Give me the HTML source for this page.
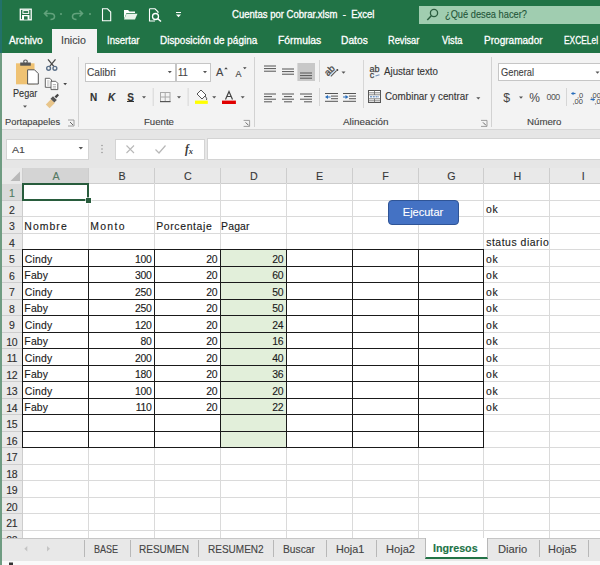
<!DOCTYPE html><html><head><meta charset="utf-8"><style>
*{margin:0;padding:0;box-sizing:border-box}
html,body{width:600px;height:565px;overflow:hidden;background:#fff}
body{position:relative;font-family:"Liberation Sans",sans-serif;color:#222}
.a{position:absolute}
.t{position:absolute;white-space:nowrap;line-height:1;-webkit-text-stroke:0.12px currentColor}
svg{position:absolute;left:0;top:0}
</style></head><body>
<div class="a" style="left:0;top:0;width:600px;height:53px;background:#217346"></div>
<div class="a" style="left:418.5px;top:5.5px;width:182px;height:18.5px;background:#a0cdb0"></div>
<div class="t" style="left:232.12px;top:10.10px;font-size:10.00px;transform:scaleX(0.953);transform-origin:0 0;color:#fff;-webkit-text-stroke:0.3px #fff;">Cuentas por Cobrar.xlsm&nbsp; -&nbsp; Excel</div>
<div class="t" style="left:445.44px;top:9.90px;font-size:10.00px;transform:scaleX(0.927);transform-origin:0 0;color:#24573a;">¿Qué desea hacer?</div>
<div class="a" style="left:52px;top:29px;width:45px;height:25px;background:#f3f3f3"></div>
<div class="t" style="left:60.74px;top:36.26px;font-size:10.29px;transform:scaleX(1.034);transform-origin:0 0;color:#444;">Inicio</div>
<div class="t" style="left:9.20px;top:36.26px;font-size:10.29px;transform:scaleX(0.981);transform-origin:0 0;color:#fff;-webkit-text-stroke:0.3px #fff;">Archivo</div>
<div class="t" style="left:106.64px;top:36.26px;font-size:10.29px;transform:scaleX(0.931);transform-origin:0 0;color:#fff;-webkit-text-stroke:0.3px #fff;">Insertar</div>
<div class="t" style="left:160.20px;top:36.26px;font-size:10.29px;transform:scaleX(0.966);transform-origin:0 0;color:#fff;-webkit-text-stroke:0.3px #fff;">Disposición de página</div>
<div class="t" style="left:278.17px;top:36.26px;font-size:10.29px;transform:scaleX(1.008);transform-origin:0 0;color:#fff;-webkit-text-stroke:0.3px #fff;">Fórmulas</div>
<div class="t" style="left:341.18px;top:36.26px;font-size:10.29px;transform:scaleX(0.996);transform-origin:0 0;color:#fff;-webkit-text-stroke:0.3px #fff;">Datos</div>
<div class="t" style="left:387.76px;top:36.26px;font-size:10.29px;transform:scaleX(0.899);transform-origin:0 0;color:#fff;-webkit-text-stroke:0.3px #fff;">Revisar</div>
<div class="t" style="left:441.61px;top:36.26px;font-size:10.29px;transform:scaleX(0.897);transform-origin:0 0;color:#fff;-webkit-text-stroke:0.3px #fff;">Vista</div>
<div class="t" style="left:484.20px;top:36.26px;font-size:10.29px;transform:scaleX(0.977);transform-origin:0 0;color:#fff;-webkit-text-stroke:0.3px #fff;">Programador</div>
<div class="t" style="left:564.33px;top:36.26px;font-size:10.29px;transform:scaleX(0.812);transform-origin:0 0;color:#fff;-webkit-text-stroke:0.3px #fff;">EXCELeI</div>
<div class="a" style="left:0;top:53px;width:600px;height:77px;background:#f3f3f3;border-bottom:1px solid #d6d6d6"></div>
<div class="a" style="left:77.5px;top:57px;width:1px;height:70px;background:#d2d2d2"></div>
<div class="a" style="left:254px;top:57px;width:1px;height:70px;background:#d2d2d2"></div>
<div class="a" style="left:490.5px;top:57px;width:1px;height:70px;background:#d2d2d2"></div>
<div class="t" style="left:4.55px;top:118.47px;font-size:8.86px;transform:scaleX(1.057);transform-origin:0 0;color:#444;">Portapapeles</div>
<div class="t" style="left:143.83px;top:118.47px;font-size:8.86px;transform:scaleX(1.087);transform-origin:0 0;color:#444;">Fuente</div>
<div class="t" style="left:342.50px;top:118.47px;font-size:8.86px;transform:scaleX(1.117);transform-origin:0 0;color:#444;">Alineación</div>
<div class="t" style="left:526.82px;top:118.47px;font-size:8.86px;transform:scaleX(1.096);transform-origin:0 0;color:#444;">Número</div>
<div class="t" style="left:13.27px;top:88.80px;font-size:10.00px;transform:scaleX(0.911);transform-origin:0 0;color:#333;">Pegar</div>
<div class="a" style="left:84.7px;top:63px;width:91.5px;height:18.5px;background:#fff;border:1px solid #c6c6c6"></div>
<div class="a" style="left:175.7px;top:63px;width:35px;height:18.5px;background:#fff;border:1px solid #c6c6c6"></div>
<div class="t" style="left:87.19px;top:67.50px;font-size:10.00px;transform:scaleX(1.015);transform-origin:0 0;color:#444;">Calibri</div>
<div class="t" style="left:178.24px;top:67.50px;font-size:10.00px;transform:scaleX(0.945);transform-origin:0 0;color:#444;">11</div>
<div class="a" style="left:498px;top:63px;width:110px;height:18px;background:#fff;border:1px solid #c6c6c6"></div>
<div class="t" style="left:500.54px;top:67.50px;font-size:10.00px;transform:scaleX(0.928);transform-origin:0 0;color:#444;">General</div>
<div class="t" style="left:90px;top:92.5px;font-size:10px;color:#333;font-weight:bold">N</div>
<div class="t" style="left:108px;top:92.5px;font-size:10px;color:#333;font-weight:bold;font-style:italic">K</div>
<div class="t" style="left:127.3px;top:92.5px;font-size:10px;color:#333;font-weight:bold">S</div>
<div class="t" style="left:216px;top:67px;font-size:11px;color:#444;">A</div>
<div class="t" style="left:235.5px;top:69.5px;font-size:9px;color:#444;">A</div>
<div class="t" style="left:384.40px;top:66.74px;font-size:10.43px;transform:scaleX(0.931);transform-origin:0 0;color:#333;">Ajustar texto</div>
<div class="t" style="left:384.51px;top:92.14px;font-size:10.43px;transform:scaleX(0.943);transform-origin:0 0;color:#333;">Combinar y centrar</div>
<div class="a" style="left:0;top:130px;width:600px;height:38px;background:#e6e6e6"></div>
<div class="a" style="left:6px;top:139px;width:83px;height:21px;background:#fff;border:1px solid #d4d4d4"></div>
<div class="t" style="left:11.70px;top:145.04px;font-size:9.71px;transform:scaleX(1.090);transform-origin:0 0;color:#444;">A1</div>
<div class="a" style="left:114.5px;top:138.5px;width:90px;height:21px;background:#fff;border:1px solid #d4d4d4"></div>
<div class="a" style="left:207px;top:138px;width:393px;height:21.5px;background:#fff;border:1px solid #d4d4d4;border-right:none"></div>
<div class="a" style="left:0;top:168px;width:600px;height:15.5px;background:#e9e9e9;border-bottom:1px solid #cdcdcd"></div>
<div class="a" style="left:0;top:168px;width:22.5px;height:370px;background:#e9e9e9;border-right:1px solid #cdcdcd"></div>
<div class="a" style="left:22.6px;top:168px;width:65.9px;height:15.5px;background:#d4d4d4;border-bottom:1px solid #9fbfa8"></div>
<div class="a" style="left:0;top:183.5px;width:22.5px;height:16.5px;background:#dadada;border-right:1px solid #c0d0c4"></div>
<div class="a" style="left:88.0px;top:168px;width:1px;height:15px;background:#cdcdcd"></div>
<div class="a" style="left:88.0px;top:183px;width:1px;height:355px;background:#dadada"></div>
<div class="a" style="left:153.9px;top:168px;width:1px;height:15px;background:#cdcdcd"></div>
<div class="a" style="left:153.9px;top:183px;width:1px;height:355px;background:#dadada"></div>
<div class="a" style="left:219.8px;top:168px;width:1px;height:15px;background:#cdcdcd"></div>
<div class="a" style="left:219.8px;top:183px;width:1px;height:355px;background:#dadada"></div>
<div class="a" style="left:285.70000000000005px;top:168px;width:1px;height:15px;background:#cdcdcd"></div>
<div class="a" style="left:285.70000000000005px;top:183px;width:1px;height:355px;background:#dadada"></div>
<div class="a" style="left:351.6px;top:168px;width:1px;height:15px;background:#cdcdcd"></div>
<div class="a" style="left:351.6px;top:183px;width:1px;height:355px;background:#dadada"></div>
<div class="a" style="left:417.50000000000006px;top:168px;width:1px;height:15px;background:#cdcdcd"></div>
<div class="a" style="left:417.50000000000006px;top:183px;width:1px;height:355px;background:#dadada"></div>
<div class="a" style="left:483.4000000000001px;top:168px;width:1px;height:15px;background:#cdcdcd"></div>
<div class="a" style="left:483.4000000000001px;top:183px;width:1px;height:355px;background:#dadada"></div>
<div class="a" style="left:549.3000000000001px;top:168px;width:1px;height:15px;background:#cdcdcd"></div>
<div class="a" style="left:549.3000000000001px;top:183px;width:1px;height:355px;background:#dadada"></div>
<div class="a" style="left:615.2px;top:168px;width:1px;height:15px;background:#cdcdcd"></div>
<div class="a" style="left:615.2px;top:183px;width:1px;height:355px;background:#dadada"></div>
<div class="a" style="left:0;top:199.5px;width:22.5px;height:1px;background:#cdcdcd"></div>
<div class="a" style="left:22.5px;top:199.5px;width:578px;height:1px;background:#dadada"></div>
<div class="a" style="left:0;top:216.0px;width:22.5px;height:1px;background:#cdcdcd"></div>
<div class="a" style="left:22.5px;top:216.0px;width:578px;height:1px;background:#dadada"></div>
<div class="a" style="left:0;top:232.5px;width:22.5px;height:1px;background:#cdcdcd"></div>
<div class="a" style="left:22.5px;top:232.5px;width:578px;height:1px;background:#dadada"></div>
<div class="a" style="left:0;top:249.0px;width:22.5px;height:1px;background:#cdcdcd"></div>
<div class="a" style="left:22.5px;top:249.0px;width:578px;height:1px;background:#dadada"></div>
<div class="a" style="left:0;top:265.5px;width:22.5px;height:1px;background:#cdcdcd"></div>
<div class="a" style="left:22.5px;top:265.5px;width:578px;height:1px;background:#dadada"></div>
<div class="a" style="left:0;top:282.0px;width:22.5px;height:1px;background:#cdcdcd"></div>
<div class="a" style="left:22.5px;top:282.0px;width:578px;height:1px;background:#dadada"></div>
<div class="a" style="left:0;top:298.5px;width:22.5px;height:1px;background:#cdcdcd"></div>
<div class="a" style="left:22.5px;top:298.5px;width:578px;height:1px;background:#dadada"></div>
<div class="a" style="left:0;top:315.0px;width:22.5px;height:1px;background:#cdcdcd"></div>
<div class="a" style="left:22.5px;top:315.0px;width:578px;height:1px;background:#dadada"></div>
<div class="a" style="left:0;top:331.5px;width:22.5px;height:1px;background:#cdcdcd"></div>
<div class="a" style="left:22.5px;top:331.5px;width:578px;height:1px;background:#dadada"></div>
<div class="a" style="left:0;top:348.0px;width:22.5px;height:1px;background:#cdcdcd"></div>
<div class="a" style="left:22.5px;top:348.0px;width:578px;height:1px;background:#dadada"></div>
<div class="a" style="left:0;top:364.5px;width:22.5px;height:1px;background:#cdcdcd"></div>
<div class="a" style="left:22.5px;top:364.5px;width:578px;height:1px;background:#dadada"></div>
<div class="a" style="left:0;top:381.0px;width:22.5px;height:1px;background:#cdcdcd"></div>
<div class="a" style="left:22.5px;top:381.0px;width:578px;height:1px;background:#dadada"></div>
<div class="a" style="left:0;top:397.5px;width:22.5px;height:1px;background:#cdcdcd"></div>
<div class="a" style="left:22.5px;top:397.5px;width:578px;height:1px;background:#dadada"></div>
<div class="a" style="left:0;top:414.0px;width:22.5px;height:1px;background:#cdcdcd"></div>
<div class="a" style="left:22.5px;top:414.0px;width:578px;height:1px;background:#dadada"></div>
<div class="a" style="left:0;top:430.5px;width:22.5px;height:1px;background:#cdcdcd"></div>
<div class="a" style="left:22.5px;top:430.5px;width:578px;height:1px;background:#dadada"></div>
<div class="a" style="left:0;top:447.0px;width:22.5px;height:1px;background:#cdcdcd"></div>
<div class="a" style="left:22.5px;top:447.0px;width:578px;height:1px;background:#dadada"></div>
<div class="a" style="left:0;top:463.5px;width:22.5px;height:1px;background:#cdcdcd"></div>
<div class="a" style="left:22.5px;top:463.5px;width:578px;height:1px;background:#dadada"></div>
<div class="a" style="left:0;top:480.0px;width:22.5px;height:1px;background:#cdcdcd"></div>
<div class="a" style="left:22.5px;top:480.0px;width:578px;height:1px;background:#dadada"></div>
<div class="a" style="left:0;top:496.5px;width:22.5px;height:1px;background:#cdcdcd"></div>
<div class="a" style="left:22.5px;top:496.5px;width:578px;height:1px;background:#dadada"></div>
<div class="a" style="left:0;top:513.0px;width:22.5px;height:1px;background:#cdcdcd"></div>
<div class="a" style="left:22.5px;top:513.0px;width:578px;height:1px;background:#dadada"></div>
<div class="a" style="left:0;top:529.5px;width:22.5px;height:1px;background:#cdcdcd"></div>
<div class="a" style="left:22.5px;top:529.5px;width:578px;height:1px;background:#dadada"></div>
<div class="a" style="left:0;top:546.0px;width:22.5px;height:1px;background:#cdcdcd"></div>
<div class="a" style="left:22.5px;top:546.0px;width:578px;height:1px;background:#dadada"></div>
<div class="t" style="left:23.1px;top:170.50px;width:65.9px;text-align:center;font-size:10.7px;color:#557a63">A</div>
<div class="t" style="left:89.0px;top:170.50px;width:65.9px;text-align:center;font-size:10.7px;color:#383838">B</div>
<div class="t" style="left:154.9px;top:170.50px;width:65.9px;text-align:center;font-size:10.7px;color:#383838">C</div>
<div class="t" style="left:220.8px;top:170.50px;width:65.9px;text-align:center;font-size:10.7px;color:#383838">D</div>
<div class="t" style="left:286.70000000000005px;top:170.50px;width:65.9px;text-align:center;font-size:10.7px;color:#383838">E</div>
<div class="t" style="left:352.6px;top:170.50px;width:65.9px;text-align:center;font-size:10.7px;color:#383838">F</div>
<div class="t" style="left:418.50000000000006px;top:170.50px;width:65.9px;text-align:center;font-size:10.7px;color:#383838">G</div>
<div class="t" style="left:484.4000000000001px;top:170.50px;width:65.9px;text-align:center;font-size:10.7px;color:#383838">H</div>
<div class="t" style="left:550.3000000000001px;top:170.50px;width:65.9px;text-align:center;font-size:10.7px;color:#383838">I</div>
<div class="t" style="left:0.8px;top:188.17px;width:22px;text-align:center;font-size:10.5px;letter-spacing:-0.4px;color:#4f7a60">1</div>
<div class="t" style="left:0.8px;top:204.67px;width:22px;text-align:center;font-size:10.5px;letter-spacing:-0.4px;color:#2e2e2e">2</div>
<div class="t" style="left:0.8px;top:221.17px;width:22px;text-align:center;font-size:10.5px;letter-spacing:-0.4px;color:#2e2e2e">3</div>
<div class="t" style="left:0.8px;top:237.67px;width:22px;text-align:center;font-size:10.5px;letter-spacing:-0.4px;color:#2e2e2e">4</div>
<div class="t" style="left:0.8px;top:254.18px;width:22px;text-align:center;font-size:10.5px;letter-spacing:-0.4px;color:#2e2e2e">5</div>
<div class="t" style="left:0.8px;top:270.68px;width:22px;text-align:center;font-size:10.5px;letter-spacing:-0.4px;color:#2e2e2e">6</div>
<div class="t" style="left:0.8px;top:287.18px;width:22px;text-align:center;font-size:10.5px;letter-spacing:-0.4px;color:#2e2e2e">7</div>
<div class="t" style="left:0.8px;top:303.68px;width:22px;text-align:center;font-size:10.5px;letter-spacing:-0.4px;color:#2e2e2e">8</div>
<div class="t" style="left:0.8px;top:320.18px;width:22px;text-align:center;font-size:10.5px;letter-spacing:-0.4px;color:#2e2e2e">9</div>
<div class="t" style="left:0.8px;top:336.68px;width:22px;text-align:center;font-size:10.5px;letter-spacing:-0.4px;color:#2e2e2e">10</div>
<div class="t" style="left:0.8px;top:353.18px;width:22px;text-align:center;font-size:10.5px;letter-spacing:-0.4px;color:#2e2e2e">11</div>
<div class="t" style="left:0.8px;top:369.68px;width:22px;text-align:center;font-size:10.5px;letter-spacing:-0.4px;color:#2e2e2e">12</div>
<div class="t" style="left:0.8px;top:386.18px;width:22px;text-align:center;font-size:10.5px;letter-spacing:-0.4px;color:#2e2e2e">13</div>
<div class="t" style="left:0.8px;top:402.68px;width:22px;text-align:center;font-size:10.5px;letter-spacing:-0.4px;color:#2e2e2e">14</div>
<div class="t" style="left:0.8px;top:419.18px;width:22px;text-align:center;font-size:10.5px;letter-spacing:-0.4px;color:#2e2e2e">15</div>
<div class="t" style="left:0.8px;top:435.68px;width:22px;text-align:center;font-size:10.5px;letter-spacing:-0.4px;color:#2e2e2e">16</div>
<div class="t" style="left:0.8px;top:452.18px;width:22px;text-align:center;font-size:10.5px;letter-spacing:-0.4px;color:#2e2e2e">17</div>
<div class="t" style="left:0.8px;top:468.68px;width:22px;text-align:center;font-size:10.5px;letter-spacing:-0.4px;color:#2e2e2e">18</div>
<div class="t" style="left:0.8px;top:485.18px;width:22px;text-align:center;font-size:10.5px;letter-spacing:-0.4px;color:#2e2e2e">19</div>
<div class="t" style="left:0.8px;top:501.68px;width:22px;text-align:center;font-size:10.5px;letter-spacing:-0.4px;color:#2e2e2e">20</div>
<div class="t" style="left:0.8px;top:518.18px;width:22px;text-align:center;font-size:10.5px;letter-spacing:-0.4px;color:#2e2e2e">21</div>
<div class="t" style="left:0.8px;top:534.68px;width:22px;text-align:center;font-size:10.5px;letter-spacing:-0.4px;color:#2e2e2e">22</div>
<div class="a" style="left:220.3px;top:249.5px;width:65.9px;height:198.0px;background:#e2efda"></div>
<div class="a" style="left:22.1px;top:249.0px;width:462.30000000000007px;height:1px;background:#1a1a1a"></div>
<div class="a" style="left:22.1px;top:265.5px;width:462.30000000000007px;height:1px;background:#1a1a1a"></div>
<div class="a" style="left:22.1px;top:282.0px;width:462.30000000000007px;height:1px;background:#1a1a1a"></div>
<div class="a" style="left:22.1px;top:298.5px;width:462.30000000000007px;height:1px;background:#1a1a1a"></div>
<div class="a" style="left:22.1px;top:315.0px;width:462.30000000000007px;height:1px;background:#1a1a1a"></div>
<div class="a" style="left:22.1px;top:331.5px;width:462.30000000000007px;height:1px;background:#1a1a1a"></div>
<div class="a" style="left:22.1px;top:348.0px;width:462.30000000000007px;height:1px;background:#1a1a1a"></div>
<div class="a" style="left:22.1px;top:364.5px;width:462.30000000000007px;height:1px;background:#1a1a1a"></div>
<div class="a" style="left:22.1px;top:381.0px;width:462.30000000000007px;height:1px;background:#1a1a1a"></div>
<div class="a" style="left:22.1px;top:397.5px;width:462.30000000000007px;height:1px;background:#1a1a1a"></div>
<div class="a" style="left:22.1px;top:414.0px;width:462.30000000000007px;height:1px;background:#1a1a1a"></div>
<div class="a" style="left:22.1px;top:430.5px;width:462.30000000000007px;height:1px;background:#1a1a1a"></div>
<div class="a" style="left:22.1px;top:447.0px;width:462.30000000000007px;height:1px;background:#1a1a1a"></div>
<div class="a" style="left:22.1px;top:249.0px;width:1px;height:199.0px;background:#1a1a1a"></div>
<div class="a" style="left:88.0px;top:249.0px;width:1px;height:199.0px;background:#1a1a1a"></div>
<div class="a" style="left:153.9px;top:249.0px;width:1px;height:199.0px;background:#1a1a1a"></div>
<div class="a" style="left:219.8px;top:249.0px;width:1px;height:199.0px;background:#1a1a1a"></div>
<div class="a" style="left:285.70000000000005px;top:249.0px;width:1px;height:199.0px;background:#1a1a1a"></div>
<div class="a" style="left:351.6px;top:249.0px;width:1px;height:199.0px;background:#1a1a1a"></div>
<div class="a" style="left:417.50000000000006px;top:249.0px;width:1px;height:199.0px;background:#1a1a1a"></div>
<div class="a" style="left:483.4000000000001px;top:249.0px;width:1px;height:199.0px;background:#1a1a1a"></div>
<div class="a" style="left:21.6px;top:182.5px;width:67.9px;height:18.5px;border:2px solid #285c3c"></div>
<div class="a" style="left:86.0px;top:197.5px;width:5px;height:5px;background:#285c3c;box-shadow:0 0 0 0.6px #fff"></div>
<div class="t" style="left:24.37px;top:221.84px;font-size:10.43px;letter-spacing:1.05px;color:#1a1a1a;">Nombre</div>
<div class="t" style="left:90.27px;top:221.84px;font-size:10.43px;letter-spacing:1.31px;color:#1a1a1a;">Monto</div>
<div class="t" style="left:156.17px;top:221.84px;font-size:10.43px;letter-spacing:0.65px;color:#1a1a1a;">Porcentaje</div>
<div class="t" style="left:221.07px;top:221.84px;font-size:10.43px;letter-spacing:0.17px;color:#1a1a1a;">Pagar</div>
<div class="t" style="left:486.08px;top:205.34px;font-size:10.43px;letter-spacing:0.66px;color:#1a1a1a;">ok</div>
<div class="t" style="left:486.19px;top:238.34px;font-size:10.43px;letter-spacing:0.53px;color:#1a1a1a;">status diario</div>
<div class="t" style="left:24.68px;top:254.84px;font-size:10.43px;letter-spacing:0.21px;color:#1a1a1a;">Cindy</div>
<div class="t" style="left:88.5px;top:254.82px;width:62.900000000000006px;text-align:right;font-size:10.45px;letter-spacing:-0.35px;color:#1a1a1a">100</div>
<div class="t" style="left:154.4px;top:254.82px;width:62.900000000000006px;text-align:right;font-size:10.45px;letter-spacing:-0.35px;color:#1a1a1a">20</div>
<div class="t" style="left:220.3px;top:254.82px;width:62.900000000000006px;text-align:right;font-size:10.45px;letter-spacing:-0.35px;color:#1a1a1a">20</div>
<div class="t" style="left:486.08px;top:254.84px;font-size:10.43px;letter-spacing:0.66px;color:#1a1a1a;">ok</div>
<div class="t" style="left:24.37px;top:271.34px;font-size:10.43px;letter-spacing:0.16px;color:#1a1a1a;">Faby</div>
<div class="t" style="left:88.5px;top:271.32px;width:62.900000000000006px;text-align:right;font-size:10.45px;letter-spacing:-0.35px;color:#1a1a1a">300</div>
<div class="t" style="left:154.4px;top:271.32px;width:62.900000000000006px;text-align:right;font-size:10.45px;letter-spacing:-0.35px;color:#1a1a1a">20</div>
<div class="t" style="left:220.3px;top:271.32px;width:62.900000000000006px;text-align:right;font-size:10.45px;letter-spacing:-0.35px;color:#1a1a1a">60</div>
<div class="t" style="left:486.08px;top:271.34px;font-size:10.43px;letter-spacing:0.66px;color:#1a1a1a;">ok</div>
<div class="t" style="left:24.68px;top:287.84px;font-size:10.43px;letter-spacing:0.21px;color:#1a1a1a;">Cindy</div>
<div class="t" style="left:88.5px;top:287.82px;width:62.900000000000006px;text-align:right;font-size:10.45px;letter-spacing:-0.35px;color:#1a1a1a">250</div>
<div class="t" style="left:154.4px;top:287.82px;width:62.900000000000006px;text-align:right;font-size:10.45px;letter-spacing:-0.35px;color:#1a1a1a">20</div>
<div class="t" style="left:220.3px;top:287.82px;width:62.900000000000006px;text-align:right;font-size:10.45px;letter-spacing:-0.35px;color:#1a1a1a">50</div>
<div class="t" style="left:486.08px;top:287.84px;font-size:10.43px;letter-spacing:0.66px;color:#1a1a1a;">ok</div>
<div class="t" style="left:24.37px;top:304.34px;font-size:10.43px;letter-spacing:0.16px;color:#1a1a1a;">Faby</div>
<div class="t" style="left:88.5px;top:304.32px;width:62.900000000000006px;text-align:right;font-size:10.45px;letter-spacing:-0.35px;color:#1a1a1a">250</div>
<div class="t" style="left:154.4px;top:304.32px;width:62.900000000000006px;text-align:right;font-size:10.45px;letter-spacing:-0.35px;color:#1a1a1a">20</div>
<div class="t" style="left:220.3px;top:304.32px;width:62.900000000000006px;text-align:right;font-size:10.45px;letter-spacing:-0.35px;color:#1a1a1a">50</div>
<div class="t" style="left:486.08px;top:304.34px;font-size:10.43px;letter-spacing:0.66px;color:#1a1a1a;">ok</div>
<div class="t" style="left:24.68px;top:320.84px;font-size:10.43px;letter-spacing:0.21px;color:#1a1a1a;">Cindy</div>
<div class="t" style="left:88.5px;top:320.82px;width:62.900000000000006px;text-align:right;font-size:10.45px;letter-spacing:-0.35px;color:#1a1a1a">120</div>
<div class="t" style="left:154.4px;top:320.82px;width:62.900000000000006px;text-align:right;font-size:10.45px;letter-spacing:-0.35px;color:#1a1a1a">20</div>
<div class="t" style="left:220.3px;top:320.82px;width:62.900000000000006px;text-align:right;font-size:10.45px;letter-spacing:-0.35px;color:#1a1a1a">24</div>
<div class="t" style="left:486.08px;top:320.84px;font-size:10.43px;letter-spacing:0.66px;color:#1a1a1a;">ok</div>
<div class="t" style="left:24.37px;top:337.34px;font-size:10.43px;letter-spacing:0.16px;color:#1a1a1a;">Faby</div>
<div class="t" style="left:88.5px;top:337.32px;width:62.900000000000006px;text-align:right;font-size:10.45px;letter-spacing:-0.35px;color:#1a1a1a">80</div>
<div class="t" style="left:154.4px;top:337.32px;width:62.900000000000006px;text-align:right;font-size:10.45px;letter-spacing:-0.35px;color:#1a1a1a">20</div>
<div class="t" style="left:220.3px;top:337.32px;width:62.900000000000006px;text-align:right;font-size:10.45px;letter-spacing:-0.35px;color:#1a1a1a">16</div>
<div class="t" style="left:486.08px;top:337.34px;font-size:10.43px;letter-spacing:0.66px;color:#1a1a1a;">ok</div>
<div class="t" style="left:24.68px;top:353.84px;font-size:10.43px;letter-spacing:0.21px;color:#1a1a1a;">Cindy</div>
<div class="t" style="left:88.5px;top:353.82px;width:62.900000000000006px;text-align:right;font-size:10.45px;letter-spacing:-0.35px;color:#1a1a1a">200</div>
<div class="t" style="left:154.4px;top:353.82px;width:62.900000000000006px;text-align:right;font-size:10.45px;letter-spacing:-0.35px;color:#1a1a1a">20</div>
<div class="t" style="left:220.3px;top:353.82px;width:62.900000000000006px;text-align:right;font-size:10.45px;letter-spacing:-0.35px;color:#1a1a1a">40</div>
<div class="t" style="left:486.08px;top:353.84px;font-size:10.43px;letter-spacing:0.66px;color:#1a1a1a;">ok</div>
<div class="t" style="left:24.37px;top:370.34px;font-size:10.43px;letter-spacing:0.16px;color:#1a1a1a;">Faby</div>
<div class="t" style="left:88.5px;top:370.32px;width:62.900000000000006px;text-align:right;font-size:10.45px;letter-spacing:-0.35px;color:#1a1a1a">180</div>
<div class="t" style="left:154.4px;top:370.32px;width:62.900000000000006px;text-align:right;font-size:10.45px;letter-spacing:-0.35px;color:#1a1a1a">20</div>
<div class="t" style="left:220.3px;top:370.32px;width:62.900000000000006px;text-align:right;font-size:10.45px;letter-spacing:-0.35px;color:#1a1a1a">36</div>
<div class="t" style="left:486.08px;top:370.34px;font-size:10.43px;letter-spacing:0.66px;color:#1a1a1a;">ok</div>
<div class="t" style="left:24.68px;top:386.84px;font-size:10.43px;letter-spacing:0.21px;color:#1a1a1a;">Cindy</div>
<div class="t" style="left:88.5px;top:386.82px;width:62.900000000000006px;text-align:right;font-size:10.45px;letter-spacing:-0.35px;color:#1a1a1a">100</div>
<div class="t" style="left:154.4px;top:386.82px;width:62.900000000000006px;text-align:right;font-size:10.45px;letter-spacing:-0.35px;color:#1a1a1a">20</div>
<div class="t" style="left:220.3px;top:386.82px;width:62.900000000000006px;text-align:right;font-size:10.45px;letter-spacing:-0.35px;color:#1a1a1a">20</div>
<div class="t" style="left:486.08px;top:386.84px;font-size:10.43px;letter-spacing:0.66px;color:#1a1a1a;">ok</div>
<div class="t" style="left:24.37px;top:403.34px;font-size:10.43px;letter-spacing:0.16px;color:#1a1a1a;">Faby</div>
<div class="t" style="left:88.5px;top:403.32px;width:62.900000000000006px;text-align:right;font-size:10.45px;letter-spacing:-0.35px;color:#1a1a1a">110</div>
<div class="t" style="left:154.4px;top:403.32px;width:62.900000000000006px;text-align:right;font-size:10.45px;letter-spacing:-0.35px;color:#1a1a1a">20</div>
<div class="t" style="left:220.3px;top:403.32px;width:62.900000000000006px;text-align:right;font-size:10.45px;letter-spacing:-0.35px;color:#1a1a1a">22</div>
<div class="t" style="left:486.08px;top:403.34px;font-size:10.43px;letter-spacing:0.66px;color:#1a1a1a;">ok</div>
<div class="a" style="left:387.5px;top:199.5px;width:71px;height:25px;background:#4472c4;border:1px solid #2f5496;border-radius:4px"></div>
<div class="t" style="left:387.5px;top:207px;width:71px;text-align:center;font-size:11px;color:#fff">Ejecutar</div>
<div class="a" style="left:0;top:538px;width:600px;height:23px;background:#e8e8e8;border-top:1px solid #c6c6c6"></div>
<div class="a" style="left:0;top:561px;width:600px;height:4px;background:#fafafa"></div>
<div class="a" style="left:84.4px;top:540px;width:1px;height:17px;background:#b8b8b8"></div>
<div class="a" style="left:129.6px;top:540px;width:1px;height:17px;background:#b8b8b8"></div>
<div class="a" style="left:198px;top:540px;width:1px;height:17px;background:#b8b8b8"></div>
<div class="a" style="left:273.4px;top:540px;width:1px;height:17px;background:#b8b8b8"></div>
<div class="a" style="left:326px;top:540px;width:1px;height:17px;background:#b8b8b8"></div>
<div class="a" style="left:375.6px;top:540px;width:1px;height:17px;background:#b8b8b8"></div>
<div class="a" style="left:539px;top:540px;width:1px;height:17px;background:#b8b8b8"></div>
<div class="a" style="left:588px;top:540px;width:1px;height:17px;background:#b8b8b8"></div>
<div class="a" style="left:425px;top:538px;width:62.5px;height:21px;background:#fff;border-left:1px solid #b8b8b8;border-right:1px solid #b8b8b8;border-bottom:2px solid #217346"></div>
<div class="t" style="left:94.28px;top:545.06px;font-size:10.29px;transform:scaleX(0.877);transform-origin:0 0;color:#444;">BASE</div>
<div class="t" style="left:138.80px;top:545.06px;font-size:10.29px;transform:scaleX(0.972);transform-origin:0 0;color:#444;">RESUMEN</div>
<div class="t" style="left:207.80px;top:545.06px;font-size:10.29px;transform:scaleX(0.974);transform-origin:0 0;color:#444;">RESUMEN2</div>
<div class="t" style="left:283.18px;top:545.06px;font-size:10.29px;transform:scaleX(0.998);transform-origin:0 0;color:#444;">Buscar</div>
<div class="t" style="left:336.13px;top:545.06px;font-size:10.29px;transform:scaleX(1.054);transform-origin:0 0;color:#444;">Hoja1</div>
<div class="t" style="left:385.51px;top:545.06px;font-size:10.29px;transform:scaleX(1.078);transform-origin:0 0;color:#444;">Hoja2</div>
<div class="t" style="left:497.50px;top:545.06px;font-size:10.29px;transform:scaleX(1.089);transform-origin:0 0;color:#444;">Diario</div>
<div class="t" style="left:548.12px;top:545.06px;font-size:10.29px;transform:scaleX(1.066);transform-origin:0 0;color:#444;">Hoja5</div>
<div class="t" style="left:433.25px;top:544.44px;font-size:10.43px;transform:scaleX(1.027);transform-origin:0 0;color:#217346;font-weight:bold;">Ingresos</div>
<svg width="600" height="565" viewBox="0 0 600 565"><rect x="20.3" y="9.2" width="10.9" height="10.6" fill="none" stroke="#fff" stroke-width="1.3"/><rect x="22.9" y="10.6" width="5.8" height="2.8" fill="none" stroke="#fff" stroke-width="1"/><rect x="22" y="15" width="7.5" height="4.6" fill="#fff"/><rect x="24" y="16.3" width="3.6" height="3.3" fill="#217346"/><path d="M45 13.5 L50.5 13.5 Q54.5 13.5 54.5 16.5 Q54.5 19.5 50.5 19.5 M47.5 10.5 L44.5 13.5 L47.5 16.5" fill="none" stroke="#62a27c" stroke-width="1.6"/><circle cx="61" cy="14" r="1" fill="#62a27c"/><path d="M82 13.5 L76.5 13.5 Q72.5 13.5 72.5 16.5 Q72.5 19.5 76.5 19.5 M79.5 10.5 L82.5 13.5 L79.5 16.5" fill="none" stroke="#62a27c" stroke-width="1.6"/><circle cx="90" cy="14" r="1" fill="#62a27c"/><path d="M102.5 8.8 L107.5 8.8 L110.7 12 L110.7 20.7 L102.5 20.7 Z" fill="none" stroke="#fff" stroke-width="1.1"/><path d="M124 10 L128 10 L129.5 11.5 L135 11.5 L135 13 L126.5 13 L124 19 Z" fill="#fff"/><path d="M126.5 13.8 L137.5 13.8 L135 19.5 L124 19.5 Z" fill="#e8f2ea"/><path d="M149.5 8.8 L155 8.8 L158 11.8 L158 13 M155 21 L149.5 21 L149.5 8.8" fill="none" stroke="#fff" stroke-width="1.1"/><circle cx="155.5" cy="16.5" r="3" fill="none" stroke="#fff" stroke-width="1.3"/><path d="M157.5 18.5 L161 21.5" stroke="#fff" stroke-width="1.6"/><rect x="176" y="12" width="5" height="1" fill="#fff"/><path d="M176 14.5 L181 14.5 L178.5 17.2 Z" fill="#fff"/><circle cx="434" cy="13" r="3.6" fill="none" stroke="#2c5e40" stroke-width="1.3"/><path d="M431.3 15.8 L427.3 20" stroke="#2c5e40" stroke-width="1.5"/><rect x="16" y="63.3" width="18.5" height="21" fill="#efc273"/><rect x="20.2" y="62.5" width="10.6" height="3.2" fill="#555"/><circle cx="25.5" cy="61.8" r="1.8" fill="none" stroke="#555" stroke-width="1.2"/><path d="M27.6 69.8 L34.5 69.8 L38.3 73.6 L38.3 84 L27.6 84 Z" fill="#fff" stroke="#555" stroke-width="1"/><path d="M23 105.6 L27 105.6 L25 107.8 Z" fill="#555"/><path d="M48 59.3 L53.8 66.3 M55.5 59.3 L49.7 66.3" stroke="#4a4a4a" stroke-width="1.3"/><circle cx="48.6" cy="68.3" r="1.9" fill="none" stroke="#5b7089" stroke-width="1.4"/><circle cx="54.9" cy="68.3" r="1.9" fill="none" stroke="#5b7089" stroke-width="1.4"/><path d="M45.3 78.3 L49.8 78.3 L51.5 80 L51.5 87.3 L45.3 87.3 Z" fill="#fff" stroke="#555" stroke-width="0.9"/><path d="M47 81 H49.5 M47 83 H49.5 M47 85 H49.5" stroke="#888" stroke-width="0.6"/><path d="M51 81.3 L55.8 81.3 L57.8 83.3 L57.8 89.6 L51 89.6 Z" fill="#fff" stroke="#555" stroke-width="0.9"/><path d="M52.8 84.5 H56 M52.8 86.3 H56 M52.8 88 H56" stroke="#888" stroke-width="0.6"/><path d="M63.3 83 L67 83 L65.15 85.2 Z" fill="#444"/><path d="M45.8 104.5 L51 99.3 L54.8 103.1 L49.6 108.3 Z" fill="#e8c58a"/><path d="M50.5 98.8 L53 96.3 L56.8 100.1 L54.3 102.6 Z" fill="#555"/><path d="M54.5 96.5 L57.5 93.8 L59 95.3 L56.3 98.3 Z" fill="#444"/><path d="M68 120 L74 120 L74 126 L68 126" fill="none" stroke="#888" stroke-width="0.8"/><path d="M70 122 L73 125" stroke="#666" stroke-width="1"/><path d="M243.6 120.4 L249.6 120.4 L249.6 126.4 L243.6 126.4" fill="none" stroke="#888" stroke-width="0.8"/><path d="M245.6 122.4 L248.6 125.4" stroke="#666" stroke-width="1"/><path d="M481 120.4 L487 120.4 L487 126.4 L481 126.4" fill="none" stroke="#888" stroke-width="0.8"/><path d="M483 122.4 L486 125.4" stroke="#666" stroke-width="1"/><path d="M167.8 71 L171.8 71 L169.8 73.3 Z" fill="#555"/><path d="M203 71 L207 71 L205 73.3 Z" fill="#555"/><path d="M142 96.3 L146 96.3 L144 98.6 Z" fill="#555"/><path d="M177 96.3 L181 96.3 L179 98.6 Z" fill="#555"/><path d="M212.2 96.3 L216.2 96.3 L214.2 98.6 Z" fill="#555"/><path d="M240.7 96.3 L244.7 96.3 L242.7 98.6 Z" fill="#555"/><path d="M341.5 71.5 L345.5 71.5 L343.5 73.8 Z" fill="#555"/><path d="M476.3 97.3 L480.3 97.3 L478.3 99.6 Z" fill="#555"/><path d="M519 96.5 L523 96.5 L521 98.8 Z" fill="#555"/><path d="M595.5 71.5 L599.5 71.5 L597.5 73.8 Z" fill="#555"/><path d="M224.2 69.3 L226 67.2 L227.8 69.3 Z" fill="#444"/><path d="M243 67.2 L246.6 67.2 L244.8 69.3 Z" fill="#444"/><rect x="127" y="101" width="7" height="1" fill="#333"/><rect x="152.7" y="88" width="1" height="18" fill="#d6d6d6"/><rect x="187.6" y="88" width="1" height="18" fill="#d6d6d6"/><rect x="319" y="88" width="1" height="18" fill="#d6d6d6"/><rect x="566" y="88" width="1" height="18" fill="#d6d6d6"/><rect x="319" y="60" width="1" height="22" fill="#d6d6d6"/><rect x="363" y="60" width="1" height="48" fill="#d6d6d6"/><rect x="160.5" y="92.5" width="9.5" height="9" fill="none" stroke="#aaa" stroke-width="1"/><path d="M165.2 92.5 V101.5 M160.5 97 H170" stroke="#aaa" stroke-width="1"/><rect x="160" y="101" width="10.5" height="1.2" fill="#555"/><path d="M197 94 L201 90 L206 95 L202 99 Z" fill="#fff" stroke="#555" stroke-width="1"/><path d="M205 96 Q207.5 98.5 206.5 100" stroke="#555" fill="none" stroke-width="1"/><rect x="195" y="100.6" width="12.8" height="3.3" fill="#ffff00"/><path d="M225.5 99.5 L229 91.5 L232.5 99.5 M226.8 96.5 H231.2" fill="none" stroke="#444" stroke-width="1.2"/><rect x="222" y="100.6" width="13.9" height="3.4" fill="#e00000"/><rect x="297.4" y="63" width="17.6" height="18" fill="#c8c8c8"/><rect x="264" y="65.5" width="12" height="1" fill="#555"/><rect x="264" y="68.1" width="12" height="1" fill="#555"/><rect x="264" y="70.7" width="12" height="1" fill="#555"/><rect x="282" y="68.5" width="12" height="1" fill="#555"/><rect x="282" y="71.1" width="12" height="1" fill="#555"/><rect x="282" y="73.7" width="12" height="1" fill="#555"/><rect x="300" y="72.5" width="12" height="1" fill="#555"/><rect x="300" y="75.1" width="12" height="1" fill="#555"/><rect x="300" y="77.7" width="12" height="1" fill="#555"/><rect x="264" y="93.5" width="12" height="1" fill="#555"/><rect x="264" y="96.1" width="8" height="1" fill="#555"/><rect x="264" y="98.7" width="12" height="1" fill="#555"/><rect x="264" y="101.3" width="8" height="1" fill="#555"/><rect x="300" y="93.5" width="12" height="1" fill="#555"/><rect x="304" y="96.1" width="8" height="1" fill="#555"/><rect x="300" y="98.7" width="12" height="1" fill="#555"/><rect x="304" y="101.3" width="8" height="1" fill="#555"/><rect x="282.0" y="93.5" width="12" height="1" fill="#555"/><rect x="284.0" y="96.1" width="8" height="1" fill="#555"/><rect x="282.0" y="98.7" width="12" height="1" fill="#555"/><rect x="284.0" y="101.3" width="8" height="1" fill="#555"/><rect x="325" y="93" width="13" height="1" fill="#555"/><rect x="331" y="95.6" width="7" height="1" fill="#555"/><rect x="331" y="98.2" width="7" height="1" fill="#555"/><rect x="325" y="100.8" width="13" height="1" fill="#555"/><path d="M325 97 L328 95 L328 99 Z" fill="#2a6ebb"/><rect x="327" y="96.5" width="3.5" height="1" fill="#2a6ebb"/><rect x="343" y="93" width="13" height="1" fill="#555"/><rect x="349" y="95.6" width="7" height="1" fill="#555"/><rect x="349" y="98.2" width="7" height="1" fill="#555"/><rect x="343" y="100.8" width="13" height="1" fill="#555"/><path d="M348.5 97 L345.5 95 L345.5 99 Z" fill="#2a6ebb"/><rect x="343" y="96.5" width="3.5" height="1" fill="#2a6ebb"/><text x="0" y="3.3" text-anchor="middle" font-family="Liberation Sans" font-size="9.5" fill="#444" stroke="#444" stroke-width="0.3" transform="translate(329.5 70.3) rotate(-45)">ab</text><path d="M330.8 76.3 L336.5 70.6" stroke="#555" stroke-width="1.1"/><circle cx="337.3" cy="70" r="1" fill="#444"/><text x="369.5" y="71.5" font-family="Liberation Sans" font-size="9" fill="#444" stroke="#444" stroke-width="0.25">ab</text><text x="369.8" y="77.5" font-family="Liberation Sans" font-size="9" fill="#444" stroke="#444" stroke-width="0.25">c</text><path d="M375.5 76 L379.5 74.8" fill="none" stroke="#6d8fb8" stroke-width="1.2"/><rect x="368.5" y="90.5" width="12" height="12" fill="#fff" stroke="#555" stroke-width="1"/><path d="M368.5 92.8 H380.5 M368.5 94.8 H380.5 M368.5 98.8 H380.5 M368.5 100.8 H380.5 M374.5 90.5 V94.8 M374.5 98.8 V102.5" stroke="#666" stroke-width="0.8" fill="none"/><path d="M370 96.8 H379" stroke="#3a6fb0" stroke-width="1" stroke-dasharray="2 0.8"/><text x="503.3" y="102" font-family="Liberation Sans" font-size="13" fill="#444" transform="translate(503.3 0) scale(0.95 1) translate(-503.3 0)">$</text><text x="529.3" y="102.3" font-family="Liberation Sans" font-size="12" fill="#444">%</text><text x="546.5" y="100.3" font-family="Liberation Sans" font-size="8.8" fill="#555" letter-spacing="-0.5">000</text><text x="577" y="97.5" font-family="Liberation Sans" font-size="7.5" fill="#444">,0</text><text x="572.5" y="103.5" font-family="Liberation Sans" font-size="7.5" fill="#444">,00</text><path d="M571.5 93.5 H575.5" stroke="#2a6ebb" stroke-width="1.2"/><path d="M571.2 93.5 L573.5 91.8 L573.5 95.2 Z" fill="#2a6ebb"/><text x="590.5" y="97.5" font-family="Liberation Sans" font-size="7.5" fill="#444">,00</text><text x="594.5" y="103.5" font-family="Liberation Sans" font-size="7.5" fill="#444">,0</text><path d="M590.5 99.5 H594.5" stroke="#2a6ebb" stroke-width="1.2"/><path d="M595 99.5 L592.7 97.8 L592.7 101.2 Z" fill="#2a6ebb"/><circle cx="102" cy="145.5" r="0.8" fill="#999"/><circle cx="102" cy="149" r="0.8" fill="#999"/><circle cx="102" cy="152.5" r="0.8" fill="#999"/><path d="M78.6 147 L83 147 L80.8 149.6 Z" fill="#555"/><path d="M126.5 145.5 L134 153 M134 145.5 L126.5 153" stroke="#b8b8b8" stroke-width="1.1"/><path d="M155.5 149.5 L159 153 L165.5 145.5" fill="none" stroke="#b8b8b8" stroke-width="1.2"/><text x="185" y="153" font-family="Liberation Serif" font-style="italic" font-size="11.5" font-weight="bold" fill="#3a3a3a">f<tspan font-size="8.5" dy="1">x</tspan></text><path d="M20 171.5 L20 181 L10.5 181 Z" fill="#b9b9b9"/><path d="M24.3 548.8 L27.3 546 L27.3 551.6 Z" fill="#c4c4c4"/><path d="M50 548.8 L47 546 L47 551.6 Z" fill="#c4c4c4"/><rect x="9" y="562.5" width="4" height="2.5" fill="#333"/></svg>
<div class="a" style="left:0;top:0;width:2px;height:53px;background:#22716a"></div>
<div class="a" style="left:0;top:53px;width:2px;height:512px;background:#6f9c82"></div>
</body></html>
